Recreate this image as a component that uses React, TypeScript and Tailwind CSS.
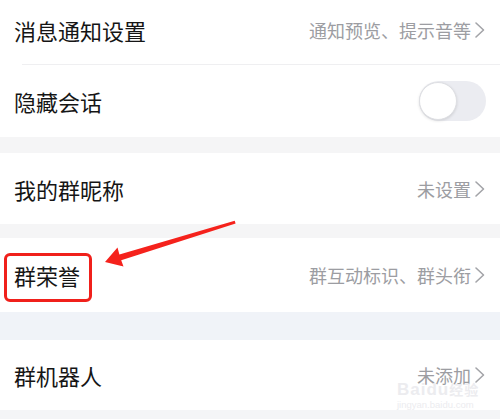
import React from "react";

const font = { fontFamily: '"Noto Sans CJK SC", "Noto Sans", sans-serif' };

function Chevron() {
  return (
    <svg width="12" height="18" viewBox="0 0 12 18" className="ml-[3px]">
      <polyline
        points="2,2 9.5,9 2,16"
        fill="none"
        stroke="#a3a4a8"
        strokeWidth="1.6"
        strokeLinecap="round"
        strokeLinejoin="round"
      />
    </svg>
  );
}

function Row({
  label,
  value,
  className = "",
  children,
}: {
  label: string;
  value?: string;
  className?: string;
  children?: React.ReactNode;
}) {
  return (
    <div className={`relative flex items-center justify-between bg-white pl-[14px] pr-[14px] ${className}`}>
      <span className="text-[22px] leading-none text-[#151515]">{label}</span>
      {value && (
        <div className="flex items-center">
          <span className="text-[18px] leading-none text-[#9c9da2]">{value}</span>
          <Chevron />
        </div>
      )}
      {children}
    </div>
  );
}

export default function App() {
  return (
    <div className="relative w-[500px] h-[419px] overflow-hidden bg-[#f4f5f7]" style={font}>
      <Row label="消息通知设置" value="通知预览、提示音等" className="h-[64px] pb-[5px]" />
      <div className="bg-white pl-[22px]">
        <div className="h-px bg-[#efeff1]" />
      </div>
      <Row label="隐藏会话" className="h-[72px] pr-[13px]">
        <div className="relative h-[40px] w-[67px] rounded-full bg-[#ebecf1]">
          <div className="absolute left-0 top-px h-[38px] w-[38px] rounded-full border border-[#dedfe3] bg-white shadow-[0_1px_3px_rgba(0,0,0,0.12)]" />
        </div>
      </Row>
      <div className="h-[16px] bg-[#f5f5f6]" />
      <Row label="我的群昵称" value="未设置" className="h-[71px]" />
      <div className="h-[14px] bg-[#f5f5f6]" />
      <Row label="群荣誉" value="群互动标识、群头衔" className="h-[74px]">
        <div className="absolute left-[4px] top-[15px] h-[49px] w-[88px] rounded-[6px] border-[3px] border-[#f0201b]" />
      </Row>
      <div className="h-[28px] bg-[#f0f3f8]" />
      <Row label="群机器人" value="未添加" className="h-[70px]">
        <div
          className="pointer-events-none absolute left-[397px] top-[41px] flex flex-col items-start leading-none"
          style={{ fontFamily: '"Liberation Sans", "Noto Sans CJK SC", sans-serif' }}
        >
          <span className="text-[17px] font-bold tracking-[1px] text-[#ececef]">
            Baidu<span className="text-[14px]">经验</span>
          </span>
          <span className="mt-[2px] text-[9.5px] text-[#ececef]">jingyan.baidu.com</span>
        </div>
      </Row>

      <svg className="pointer-events-none absolute left-0 top-0" width="500" height="419">
        <polygon
          points="105,262 117.5,247.5 119.4,254.4 234.7,220.8 235.6,223.4 121.2,260.2 123.5,266.5"
          fill="#f5221c"
        />
      </svg>
    </div>
  );
}
